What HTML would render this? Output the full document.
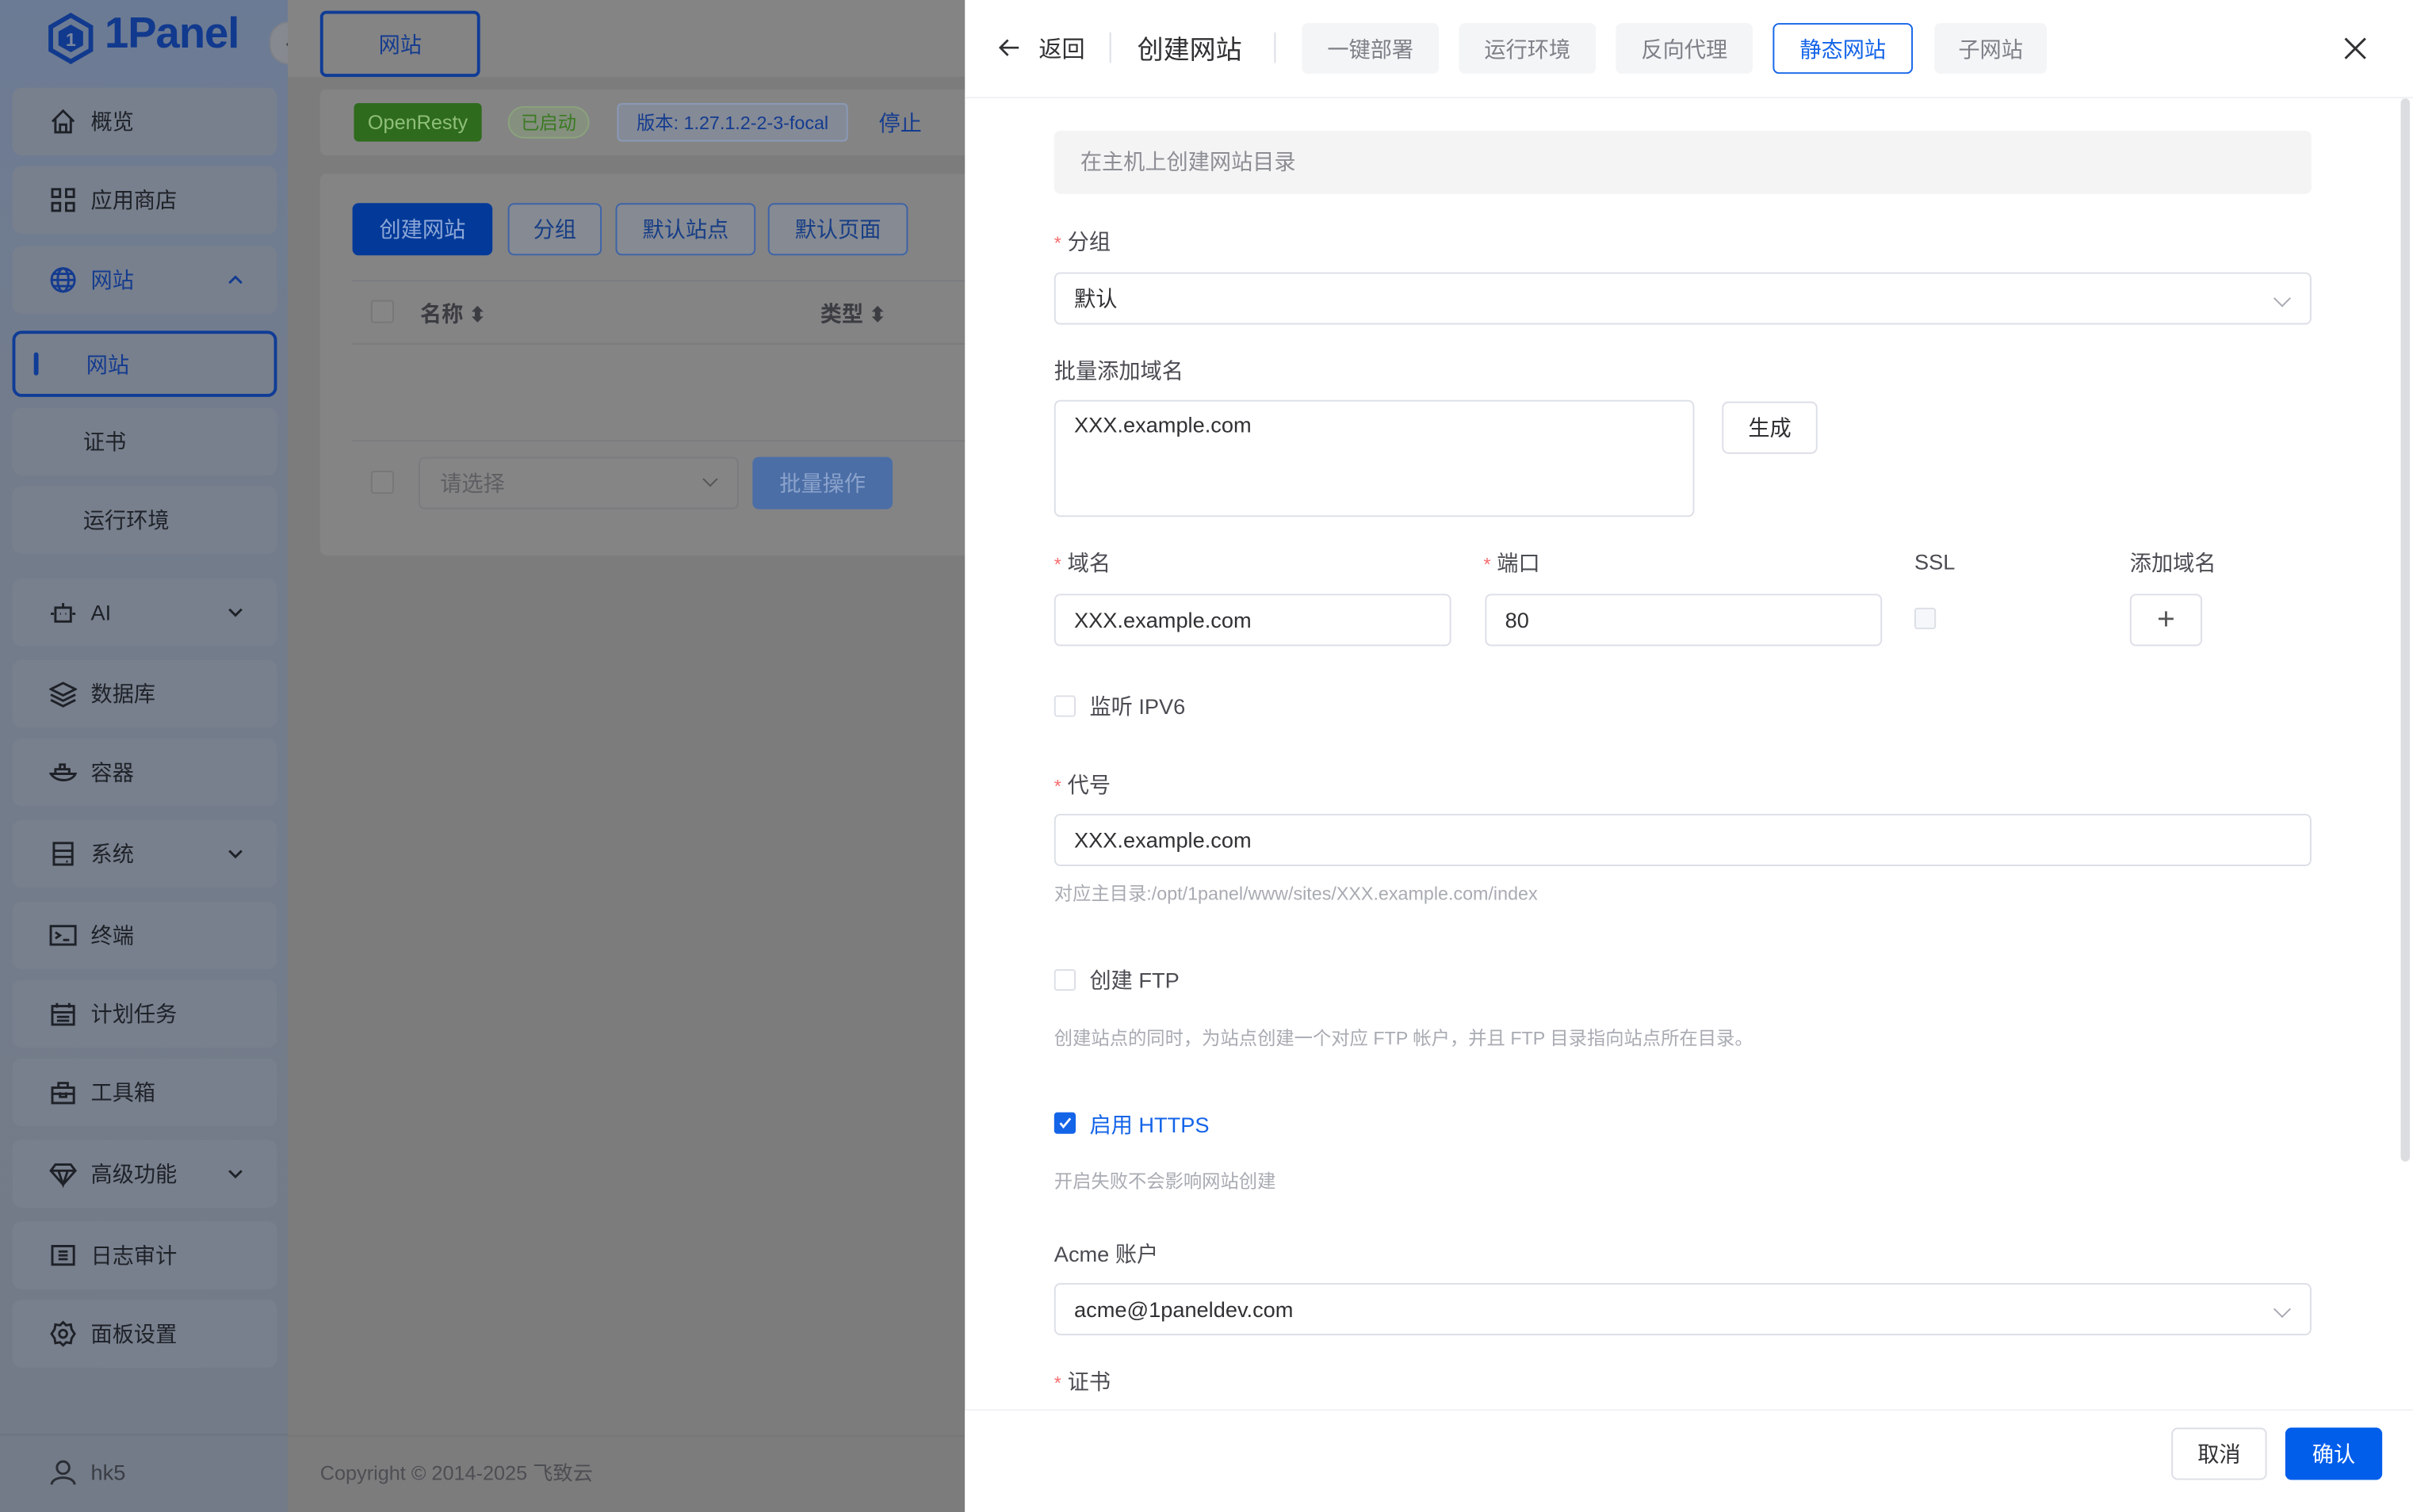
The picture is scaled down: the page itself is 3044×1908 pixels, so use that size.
<!DOCTYPE html>
<html><head><meta charset="utf-8"><style>
*{box-sizing:border-box;margin:0;padding:0}
html,body{width:3044px;height:1908px;overflow:hidden;background:#7c7c7d}
#s{position:absolute;left:0;top:0;width:1568px;height:983px;transform:scale(1.94133);transform-origin:0 0;font-family:"Liberation Sans","Noto Sans CJK SC",sans-serif;font-size:14px;color:#303133}
.a{position:absolute}
.side{left:0;top:0;width:187px;height:983px;background:linear-gradient(180deg,#6c7b95 0%,#737c8b 30%,#737b88 100%)}
.mi{position:absolute;left:8px;width:172px;height:44px;border-radius:6px;background:#78808e;display:flex;align-items:center;padding-left:24px;color:#1e2127;font-size:14px}
.mi svg{width:18px;height:18px;margin-right:9px;fill:none;stroke:#1e2127;stroke-width:1.5}
.mi svg.ch{position:absolute;right:22px;top:17px;width:10px;height:10px;margin:0}
.sub{padding-left:46px}
.card{background:#848485;border-radius:4px}
.btn{position:absolute;height:34px;border:1px solid #3d63a8;border-radius:4px;color:#163d85;display:flex;align-items:center;justify-content:center;font-size:14px;background:#858a93}
.lbl{position:absolute;left:685px;font-size:14px;color:#4a4c52}
.req:before{content:"*";color:#f56c6c;margin-right:4px;font-size:12px}
.inp{position:absolute;height:34px;border:1px solid #dcdfe6;border-radius:4px;background:#fff;padding-left:12px;display:flex;align-items:center;font-size:14px;color:#303133}
.hint{position:absolute;left:685px;font-size:12px;color:#a8abb2}
.cb{position:absolute;width:14px;height:14px;border:1px solid #dcdfe6;border-radius:2px;background:#fff}
.tab{position:absolute;top:15px;height:33px;background:#f4f5f7;border-radius:4px;color:#7d8087;display:flex;align-items:center;justify-content:center;font-size:14px}
.dd{position:absolute;right:14px;top:12px;width:8px;height:8px;border-right:1px solid #a8abb2;border-bottom:1px solid #a8abb2;transform:rotate(45deg)}
</style></head><body><div id="s">
<div class="a side"></div>
<div class="a" style="left:30px;top:8px;width:32px;height:34px"><svg viewBox="0 0 32 34" width="32" height="34"><path d="M16 2 L29 9.5 V24.5 L16 32 L3 24.5 V9.5Z" fill="none" stroke="#113a8e" stroke-width="3"/><path d="M16 8 L24 12.5 V21.5 L16 26 L8 21.5 V12.5Z" fill="#113a8e"/><text x="16" y="22" font-size="12" fill="#7a87a0" text-anchor="middle" font-weight="bold" font-family="Liberation Sans">1</text></svg></div>
<div class="a" style="left:68px;top:6px;font-size:28px;font-weight:bold;color:#113a8e;letter-spacing:-0.5px">1Panel</div>
<div class="a" style="left:175px;top:14px;width:25px;height:28px;border-radius:14px;background:#86898f;border:1px solid #7d8087;color:#444;font-size:12px;text-align:center;line-height:26px">‹</div>

<div class="mi" style="top:57px"><svg viewBox="0 0 18 18"><path d="M2 9 L9 2 L16 9 M4 7 V16 H14 V7 M7 16 V11 H11 V16"/></svg>概览</div>
<div class="mi" style="top:108px"><svg viewBox="0 0 18 18"><rect x="2" y="2" width="5" height="5"/><rect x="11" y="2" width="5" height="5"/><rect x="2" y="11" width="5" height="5"/><rect x="11" y="11" width="5" height="5"/></svg>应用商店</div>
<div class="mi" style="top:160px;color:#143b8f"><svg viewBox="0 0 18 18" style="stroke:#143b8f"><circle cx="9" cy="9" r="7.5"/><ellipse cx="9" cy="9" rx="3.5" ry="7.5"/><path d="M1.5 9 H16.5 M3 5 H15 M3 13 H15"/></svg>网站<svg class="ch" viewBox="0 0 10 10" style="stroke:#143b8f"><path d="M1 7 L5 3 L9 7"/></svg></div>
<div class="mi" style="top:215px;height:43px;border:2px solid #0f3c96;padding-left:12px;color:#143b8f"><span style="width:3px;height:15px;background:#0f3c96;border-radius:2px;margin-right:31px"></span>网站</div>
<div class="mi sub" style="top:265px">证书</div>
<div class="mi sub" style="top:316px">运行环境</div>
<div class="mi" style="top:376px"><svg viewBox="0 0 18 18"><rect x="4" y="6" width="10" height="9"/><path d="M9 6 V3 M1 10 H3 M15 10 H17 M7 10 H7.5 M10.5 10 H11"/></svg>AI<svg class="ch" viewBox="0 0 10 10"><path d="M1 3 L5 7 L9 3"/></svg></div>
<div class="mi" style="top:429px"><svg viewBox="0 0 18 18"><path d="M1 6 L9 2 L17 6 L9 10Z M1 9.5 L9 13.5 L17 9.5 M1 13 L9 17 L17 13"/></svg>数据库</div>
<div class="mi" style="top:480px"><svg viewBox="0 0 18 18"><path d="M1 10 H17 C15 15 5 16 1 10Z M4 10 V7 H13 V10 M7 7 V4 H10 V7"/></svg>容器</div>
<div class="mi" style="top:533px"><svg viewBox="0 0 18 18"><rect x="3" y="2" width="12" height="14"/><path d="M3 7 H15 M3 11 H15 M11 14 H12"/></svg>系统<svg class="ch" viewBox="0 0 10 10"><path d="M1 3 L5 7 L9 3"/></svg></div>
<div class="mi" style="top:586px"><svg viewBox="0 0 18 18"><rect x="1" y="3" width="16" height="12"/><path d="M4 7 L7 9 L4 11 M9 12 H13"/></svg>终端</div>
<div class="mi" style="top:637px"><svg viewBox="0 0 18 18"><rect x="2" y="4" width="14" height="12"/><path d="M5 2 V5 M13 2 V5 M2 8 H16 M5 11 H13 M5 13.5 H13"/></svg>计划任务</div>
<div class="mi" style="top:688px"><svg viewBox="0 0 18 18"><rect x="2" y="6" width="14" height="10"/><path d="M6 6 V3 H12 V6 M2 10 H16 M7 9 V12 H11 V9"/></svg>工具箱</div>
<div class="mi" style="top:741px"><svg viewBox="0 0 18 18"><path d="M1 7 L4 3 H14 L17 7 L9 16Z M1 7 H17 M6 7 L9 16 L12 7"/></svg>高级功能<svg class="ch" viewBox="0 0 10 10"><path d="M1 3 L5 7 L9 3"/></svg></div>
<div class="mi" style="top:794px"><svg viewBox="0 0 18 18"><rect x="2" y="3" width="14" height="12"/><path d="M6 6.5 H12 M6 9 H12 M6 11.5 H12"/></svg>日志审计</div>
<div class="mi" style="top:845px"><svg viewBox="0 0 18 18"><circle cx="9" cy="9" r="2.5"/><path d="M9 1.5 L11 3.5 L14 3 L14.5 6 L16.5 9 L14.5 12 L14 15 L11 14.5 L9 16.5 L7 14.5 L4 15 L3.5 12 L1.5 9 L3.5 6 L4 3 L7 3.5Z"/></svg>面板设置</div>
<div class="a" style="left:0;top:932px;width:187px;height:1px;background:#6d7480"></div>
<div class="mi" style="top:935px;background:none"><svg viewBox="0 0 18 18" style="stroke:#2a2d33"><circle cx="9" cy="6" r="4"/><path d="M1.5 17 C2 11 16 11 16.5 17"/></svg><span style="color:#3a3d44">hk5</span></div>

<div class="a" style="left:187px;top:0;width:440px;height:50px;background:#848485"></div>
<div class="a" style="left:208px;top:7px;width:104px;height:43px;border:2px solid #0f3c96;border-radius:4px;background:#848485;color:#143b8f;display:flex;align-items:center;justify-content:center">网站</div>
<div class="a card" style="left:208px;top:58px;width:440px;height:43px"></div>
<div class="a" style="left:230px;top:67px;width:83px;height:25px;background:#2e6b1c;border-radius:3px;color:#8fbf7a;font-size:13px;display:flex;align-items:center;justify-content:center">OpenResty</div>
<div class="a" style="left:330px;top:69px;width:53px;height:21px;border:1px solid #8ba37d;border-radius:11px;background:#85907f;color:#3a7a22;font-size:12px;display:flex;align-items:center;justify-content:center">已启动</div>
<div class="a" style="left:401px;top:67px;width:150px;height:25px;border:1px solid #8a9ab8;border-radius:3px;background:#848a96;color:#143b8f;font-size:12px;display:flex;align-items:center;justify-content:center">版本: 1.27.1.2-2-3-focal</div>
<div class="a" style="left:571px;top:70px;color:#143b8f">停止</div>
<div class="a card" style="left:208px;top:113px;width:440px;height:248px"></div>
<div class="btn" style="left:229px;top:132px;width:91px;background:#033a99;color:#8ea7d6;border-color:#033a99">创建网站</div>
<div class="btn" style="left:330px;top:132px;width:61px">分组</div>
<div class="btn" style="left:400px;top:132px;width:91px">默认站点</div>
<div class="btn" style="left:499px;top:132px;width:91px">默认页面</div>
<div class="a" style="left:229px;top:182px;width:400px;height:1px;background:#7a7b7e"></div>
<div class="a" style="left:241px;top:195px;width:15px;height:15px;border:1px solid #777;border-radius:2px;background:#868686"></div>
<div class="a" style="left:273px;top:194px;color:#3b3d42;font-weight:bold">名称 <span style="font-size:13px">⬍</span></div>
<div class="a" style="left:533px;top:194px;color:#3b3d42;font-weight:bold">类型 <span style="font-size:13px">⬍</span></div>
<div class="a" style="left:229px;top:223px;width:400px;height:1px;background:#7a7b7e"></div>
<div class="a" style="left:229px;top:286px;width:400px;height:1px;background:#7a7b7e"></div>
<div class="a" style="left:241px;top:306px;width:15px;height:15px;border:1px solid #777;border-radius:2px;background:#868686"></div>
<div class="a" style="left:272px;top:297px;width:208px;height:34px;border:1px solid #7a7b7e;border-radius:4px;background:#858585;color:#5d5f63;padding-left:13px;line-height:32px">请选择<span style="position:absolute;right:14px;top:10px;width:7px;height:7px;border-right:1px solid #555;border-bottom:1px solid #555;transform:rotate(45deg)"></span></div>
<div class="btn" style="left:489px;top:297px;width:91px;background:#4c6ea6;color:#8ba3cc;border-color:#4c6ea6">批量操作</div>
<div class="a" style="left:187px;top:933px;width:440px;height:1px;background:#777"></div>
<div class="a" style="left:208px;top:947px;font-size:13px;color:#4c4e52">Copyright © 2014-2025 飞致云</div>

<!-- drawer -->
<div class="a" style="left:627px;top:0;width:941px;height:983px;background:#fff"></div>
<div class="a" style="left:627px;top:63px;width:941px;height:1px;background:#eef0f3"></div>
<svg class="a" style="left:649px;top:24px" width="14" height="14" viewBox="0 0 14 14"><path d="M13 7 H1 M6 2 L1 7 L6 12" fill="none" stroke="#303133" stroke-width="1.4"/></svg>
<div class="a" style="left:675px;top:21px;font-size:15px">返回</div>
<div class="a" style="left:721px;top:21px;width:1px;height:20px;background:#dcdfe6"></div>
<div class="a" style="left:739px;top:18px;font-size:17px">创建网站</div>
<div class="a" style="left:828px;top:21px;width:1px;height:20px;background:#dcdfe6"></div>
<div class="tab" style="left:846px;width:89px">一键部署</div>
<div class="tab" style="left:948px;width:89px">运行环境</div>
<div class="tab" style="left:1050px;width:89px">反向代理</div>
<div class="tab" style="left:1152px;width:91px;background:#fff;border:1px solid #1464e8;color:#1464e8">静态网站</div>
<div class="tab" style="left:1257px;width:73px">子网站</div>
<svg class="a" style="left:1523px;top:24px" width="15" height="15" viewBox="0 0 15 15"><path d="M1 1 L14 14 M14 1 L1 14" stroke="#303133" stroke-width="1.5"/></svg>
<div class="a" style="left:1560px;top:64px;width:6px;height:691px;background:#dcdde0;border-radius:3px"></div>

<div class="a" style="left:685px;top:85px;width:817px;height:41px;background:#f4f4f5;border-radius:4px;color:#8c8e94;padding-left:17px;line-height:41px">在主机上创建网站目录</div>
<div class="lbl req" style="top:147px">分组</div>
<div class="inp" style="left:685px;top:177px;width:817px">默认<span class="dd"></span></div>
<div class="lbl" style="top:231px">批量添加域名</div>
<div class="inp" style="left:685px;top:260px;width:416px;height:76px;align-items:flex-start;padding-top:7px">XXX.example.com</div>
<div class="inp" style="left:1119px;top:261px;width:62px;padding-left:0;justify-content:center">生成</div>
<div class="lbl req" style="top:356px">域名</div>
<div class="lbl req" style="top:356px;left:964px">端口</div>
<div class="lbl" style="top:357px;left:1244px">SSL</div>
<div class="lbl" style="top:356px;left:1384px">添加域名</div>
<div class="inp" style="left:685px;top:386px;width:258px">XXX.example.com</div>
<div class="inp" style="left:965px;top:386px;width:258px">80</div>
<div class="cb" style="left:1244px;top:395px;background:#f5f7fa"></div>
<div class="inp" style="left:1384px;top:386px;width:47px;padding-left:0;justify-content:center;font-size:20px;color:#555;font-weight:300">+</div>
<div class="cb" style="left:685px;top:452px"></div>
<div class="lbl" style="top:449px;left:708px;color:#4a4c52">监听 IPV6</div>
<div class="lbl req" style="top:500px">代号</div>
<div class="inp" style="left:685px;top:529px;width:817px">XXX.example.com</div>
<div class="hint" style="top:572px">对应主目录:/opt/1panel/www/sites/XXX.example.com/index</div>
<div class="cb" style="left:685px;top:630px"></div>
<div class="lbl" style="top:627px;left:708px">创建 FTP</div>
<div class="hint" style="top:666px">创建站点的同时，为站点创建一个对应 FTP 帐户，并且 FTP 目录指向站点所在目录。</div>
<div class="cb" style="left:685px;top:723px;background:#1464e8;border-color:#1464e8"><svg width="12" height="12" viewBox="0 0 12 12" style="position:absolute;left:0;top:0"><path d="M3 6 L5 8.5 L9.5 3" fill="none" stroke="#fff" stroke-width="1.4"/></svg></div>
<div class="lbl" style="top:721px;left:708px;color:#1464e8">启用 HTTPS</div>
<div class="hint" style="top:759px">开启失败不会影响网站创建</div>
<div class="lbl" style="top:805px">Acme 账户</div>
<div class="inp" style="left:685px;top:834px;width:817px">acme@1paneldev.com<span class="dd"></span></div>
<div class="a" style="left:627px;top:916px;width:941px;height:1px;background:#eef0f3"></div>
<div class="a" style="left:627px;top:917px;width:941px;height:66px;background:#fff"></div>
<div class="inp" style="left:1411px;top:928px;width:62px;padding-left:0;justify-content:center">取消</div>
<div class="a" style="left:1485px;top:928px;width:63px;height:34px;background:#005eeb;border-radius:4px;color:#fff;display:flex;align-items:center;justify-content:center">确认</div>
<div class="lbl req" style="top:888px">证书</div>
</div></body></html>
